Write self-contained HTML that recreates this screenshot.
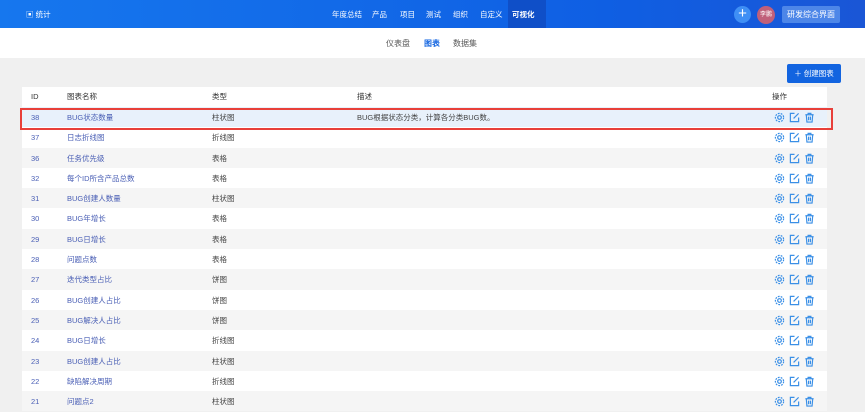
<!DOCTYPE html>
<html><head><meta charset="utf-8"><style>
*{margin:0;padding:0;box-sizing:border-box}
body{width:865px;height:412px;overflow:hidden;background:#f0f0f0;font-family:"Liberation Sans","Noto Sans CJK SC",sans-serif;font-size:7.5px;color:#444;position:relative}
.hd{position:absolute;left:0;top:0;width:865px;height:28px;background:linear-gradient(90deg,#1677ee,#0f5fe3 70%,#1a56d6);color:#fff}
.hd span{position:absolute;top:9px;font-size:7.5px}
.act{position:absolute;left:508px;top:0;width:38px;height:28px;background:#0f4fc8}
.sub{position:absolute;left:0;top:28px;width:865px;height:30px;background:#fff}
.sub span{position:absolute;top:10px;font-size:8px;color:#555}
.btn{position:absolute;left:787px;top:64px;width:54px;height:19px;background:#1264e0;color:#fff;border-radius:2px;font-size:7.5px;line-height:19px;text-align:center}
.tb{position:absolute;left:22px;top:87px;width:805px;background:#fff}
.r{position:relative;height:20.3px;line-height:21px}
.r:nth-child(even){background:#f5f5f5}
.r span{position:absolute}
.c1{left:9px}.c2{left:45px}.c3{left:190px}.c4{left:335px}
.h{height:20px;line-height:20px;background:#fff!important;color:#333}
.lk{color:#4a5fb5}
.ops{left:752px;top:5px;display:flex;gap:4px}
.hl{position:absolute;left:20px;top:108px;width:813px;height:22px;border:2px solid #e8403a}
</style></head><body>
<div class="hd"><div class="act"></div>
<span style="left:26px">▣ 统计</span>
<span style="left:332px">年度总结</span><span style="left:372px">产品</span><span style="left:400px">项目</span><span style="left:426px">测试</span><span style="left:453px">组织</span><span style="left:480px">自定义</span><span style="left:512px;font-weight:bold">可视化</span>
<div style="position:absolute;left:734px;top:6px;width:17px;height:17px;border-radius:50%;background:#3f8ff5;text-align:center;line-height:16px;font-size:15px">+</div>
<div style="position:absolute;left:757px;top:6px;width:18px;height:18px;border-radius:50%;background:#c0607a;font-size:6px;text-align:center;line-height:18px">李鹏</div>
<div style="position:absolute;left:782px;top:6px;width:58px;height:17px;border-radius:2px;background:#4d86e8;font-size:8px;text-align:center;line-height:17px">研发综合界面</div>
</div>
<div class="sub"><span style="left:386px">仪表盘</span><span style="left:424px;color:#1264e0;font-weight:bold">图表</span><span style="left:453px">数据集</span></div>
<div class="btn">＋ 创建图表</div>
<div class="tb" id="t">
<div class="r h"><span class="c1">ID</span><span class="c2">图表名称</span><span class="c3">类型</span><span class="c4">描述</span><span style="left:750px">操作</span></div>
</div>
<div class="hl"></div>
<script>
var d=[["38","BUG状态数量","柱状图","BUG根据状态分类，计算各分类BUG数。"],["37","日志折线图","折线图",""],["36","任务优先级","表格",""],["32","每个ID所含产品总数","表格",""],["31","BUG创建人数量","柱状图",""],["30","BUG年增长","表格",""],["29","BUG日增长","表格",""],["28","问题点数","表格",""],["27","迭代类型占比","饼图",""],["26","BUG创建人占比","饼图",""],["25","BUG解决人占比","饼图",""],["24","BUG日增长","折线图",""],["23","BUG创建人占比","柱状图",""],["22","缺陷解决周期","折线图",""],["21","问题点2","柱状图",""]];
var ic='<svg width="11" height="11" viewBox="0 0 12 12" fill="none" stroke="#3a8fe6" stroke-width="1.3"><circle cx="6" cy="6" r="2"/><circle cx="6" cy="6" r="4.5" stroke-dasharray="2 1.2"/></svg><svg width="11" height="11" viewBox="0 0 12 12" fill="none" stroke="#3a8fe6" stroke-width="1.3"><path d="M6 1.5H1.5v9h9V6"/><path d="M5 7l5.5-5.5"/></svg><svg width="11" height="11" viewBox="0 0 12 12" fill="none" stroke="#3a8fe6" stroke-width="1.3"><path d="M1.5 3h9M4.5 3V1.5h3V3M2.5 3l.7 8h5.6l.7-8M5 5v4M7 5v4"/></svg>';
var h='';d.forEach(function(r,i){h+='<div class="r"'+(i==0?' style="background:#e8f1fb"':'')+'><span class="c1 lk">'+r[0]+'</span><span class="c2 lk">'+r[1]+'</span><span class="c3">'+r[2]+'</span><span class="c4">'+r[3]+'</span><span class="ops">'+ic+'</span></div>'});
document.getElementById('t').innerHTML+=h;
</script>
</body></html>
